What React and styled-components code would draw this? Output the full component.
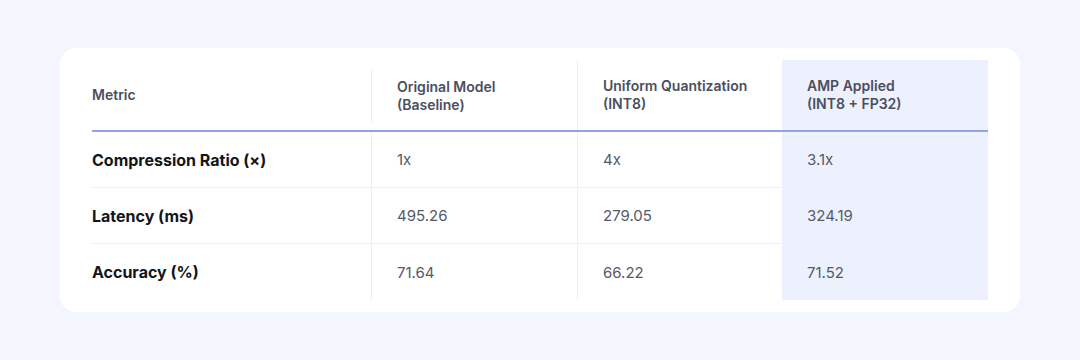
import styled, { createGlobalStyle } from "styled-components";

const GlobalStyle = createGlobalStyle`
  html, body {
    margin: 0;
    padding: 0;
    background: #f3f6fe;
    font-family: Inter, "Noto Sans", "Liberation Sans", sans-serif;
  }
`;

const columns = [
  { title: "Metric" },
  { title: "Original Model", sub: "(Baseline)", inset: true },
  { title: "Uniform Quantization", sub: "(INT8)" },
  { title: "AMP Applied", sub: "(INT8 + FP32)", highlight: true },
];

const rows = [
  { label: "Compression Ratio (×)", values: ["1x", "4x", "3.1x"] },
  { label: "Latency (ms)", values: ["495.26", "279.05", "324.19"] },
  { label: "Accuracy (%)", values: ["71.64", "66.22", "71.52"] },
];

function App() {
  return (
    <>
      <GlobalStyle />
      <Page>
        <Card>
          <Table>
            {columns.map((c, i) => (
              <HeadCell key={c.title} $first={i === 0} $inset={c.inset} $highlight={c.highlight}>
                <span>
                  {c.title}
                  {c.sub && <br />}
                  {c.sub}
                </span>
              </HeadCell>
            ))}
            {rows.map((r, ri) => (
              <Row key={r.label}>
                <LabelCell $last={ri === rows.length - 1}>{r.label}</LabelCell>
                {r.values.map((v, vi) => (
                  <ValueCell
                    key={vi}
                    $last={ri === rows.length - 1}
                    $highlight={vi === 2}
                  >
                    {v}
                  </ValueCell>
                ))}
              </Row>
            ))}
          </Table>
        </Card>
      </Page>
    </>
  );
}

export default App;

const Page = styled.div`
  width: 1080px;
  height: 360px;
  padding-top: 48px;
  box-sizing: border-box;
  display: flex;
  justify-content: center;
  align-items: flex-start;
`;

const Card = styled.div`
  width: 960px;
  background: #ffffff;
  border-radius: 16px;
  padding: 12px 32px;
  box-sizing: border-box;
`;

const Table = styled.div`
  display: grid;
  grid-template-columns: 279px 206px 205px 206px;
`;

const Row = styled.div`
  display: contents;
`;

const HeadCell = styled.div`
  height: ${(p) => (p.$inset ? "53px" : "70px")};
  margin-top: ${(p) => (p.$inset ? "9px" : "0")};
  margin-bottom: ${(p) => (p.$inset ? "10px" : "2px")};
  display: flex;
  align-items: center;
  padding-left: ${(p) => (p.$first ? "0" : "25px")};
  border-left: ${(p) => (p.$first || p.$highlight ? "none" : "1px solid #efeff2")};
  background: ${(p) => (p.$highlight ? "#edf1fd" : "transparent")};
  font-size: 14px;
  font-weight: 600;
  line-height: 18px;
  color: #4a4f5e;
  position: relative;
  &::after {
    content: "";
    position: absolute;
    left: ${(p) => (p.$first || p.$highlight ? "0" : "-1px")};
    right: 0;
    bottom: ${(p) => (p.$inset ? "-10px" : "-2px")};
    height: 2px;
    background: #8ea3ea;
  }
`;

const LabelCell = styled.div`
  height: ${(p) => (p.$last ? "56px" : "55px")};
  display: flex;
  align-items: center;
  border-bottom: ${(p) => (p.$last ? "none" : "1px solid #f0f0f3")};
  font-size: 16px;
  font-weight: 700;
  color: #141519;
`;

const ValueCell = styled.div`
  height: ${(p) => (p.$last ? "56px" : "55px")};
  display: flex;
  align-items: center;
  padding-left: 25px;
  border-left: ${(p) => (p.$highlight ? "none" : "1px solid #efeff2")};
  border-bottom: ${(p) =>
    p.$last ? "none" : p.$highlight ? "1px solid #edf1fd" : "1px solid #f0f0f3"};
  background: ${(p) => (p.$highlight ? "#edf1fd" : "transparent")};
  font-size: 15px;
  font-weight: 400;
  color: #565a66;
`;
